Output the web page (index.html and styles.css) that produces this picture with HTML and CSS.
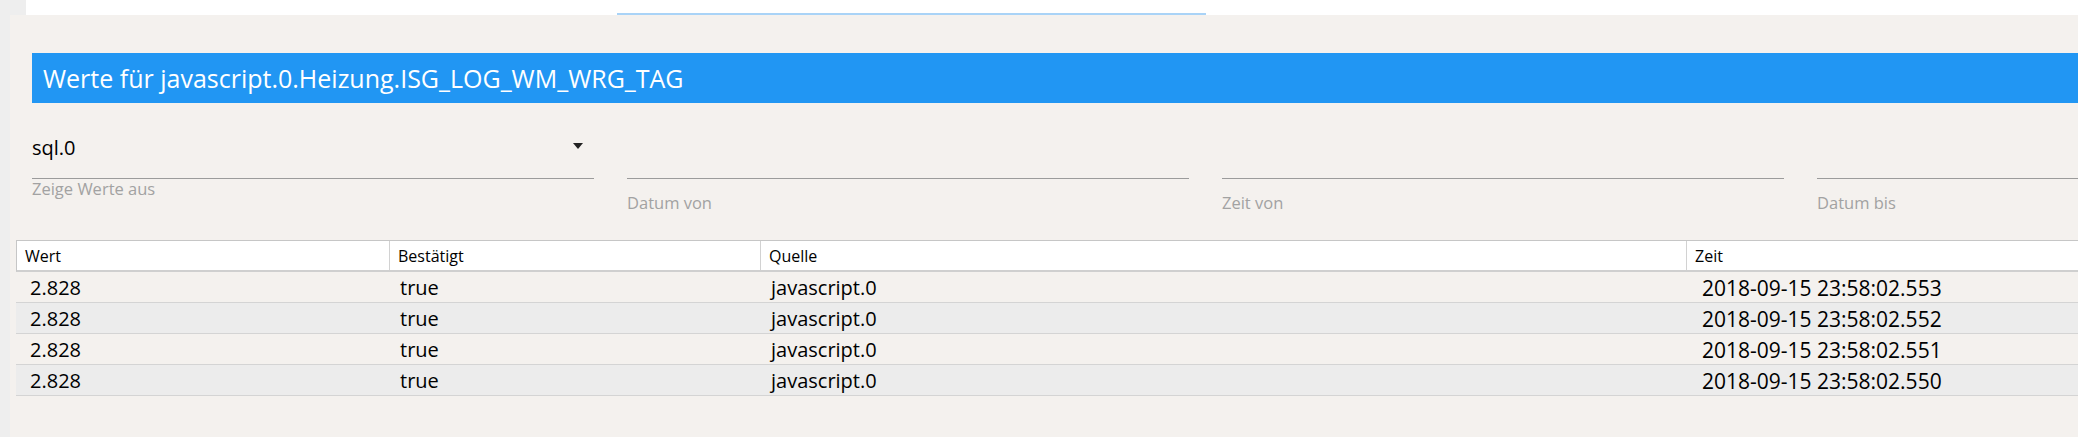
FILE: index.html
```html
<!DOCTYPE html>
<html lang="de">
<head>
<meta charset="utf-8">
<title>Werte</title>
<link rel="stylesheet" href="styles.css">
</head>
<body>
<div class="topbar">
  <div class="tabs"><div class="tab-indicator"></div></div>
</div>
<div class="panel">
  <div class="title-bar">Werte für javascript.0.Heizung.ISG_LOG_WM_WRG_TAG</div>
  <div class="fields">
    <div class="field">
      <div class="field-input">
        <span class="value">sql.0</span>
        <span class="arrow"></span>
      </div>
      <div class="field-label">Zeige Werte aus</div>
    </div>
    <div class="field">
      <div class="field-input"></div>
      <div class="field-label picker">Datum von</div>
    </div>
    <div class="field">
      <div class="field-input"></div>
      <div class="field-label picker">Zeit von</div>
    </div>
    <div class="field">
      <div class="field-input"></div>
      <div class="field-label picker">Datum bis</div>
    </div>
  </div>
  <div class="table">
    <div class="row head">
      <div class="cell">Wert</div>
      <div class="cell">Bestätigt</div>
      <div class="cell">Quelle</div>
      <div class="cell">Zeit</div>
    </div>
    <div class="row">
      <div class="cell">2.828</div>
      <div class="cell">true</div>
      <div class="cell">javascript.0</div>
      <div class="cell time">2018-09-15 23:58:02.553</div>
    </div>
    <div class="row alt">
      <div class="cell">2.828</div>
      <div class="cell">true</div>
      <div class="cell">javascript.0</div>
      <div class="cell time">2018-09-15 23:58:02.552</div>
    </div>
    <div class="row">
      <div class="cell">2.828</div>
      <div class="cell">true</div>
      <div class="cell">javascript.0</div>
      <div class="cell time">2018-09-15 23:58:02.551</div>
    </div>
    <div class="row alt">
      <div class="cell">2.828</div>
      <div class="cell">true</div>
      <div class="cell">javascript.0</div>
      <div class="cell time">2018-09-15 23:58:02.550</div>
    </div>
  </div>
</div>
</body>
</html>
```
FILE: styles.css
```css
html, body {
  margin: 0;
  padding: 0;
}
body {
  background: #eeeeee;
  font-family: "Open Sans", "Noto Sans", sans-serif;
  color: #000;
  overflow: hidden;
  width: 2078px;
  height: 437px;
}
.topbar {
  height: 15px;
  padding-left: 26px;
}
.tabs {
  height: 15px;
  background: #ffffff;
  display: flex;
  align-items: flex-end;
  padding-left: 591px;
}
.tab-indicator {
  width: 589px;
  height: 2px;
  background: #a9d3f7;
}
.panel {
  margin-left: 10px;
  background: #f4f1ee;
  height: 422px;
  padding-top: 38px;
  box-sizing: border-box;
  overflow: hidden;
}
.title-bar {
  margin-left: 22px;
  height: 50px;
  background: #2196f3;
  color: #ffffff;
  font-size: 25px;
  line-height: 50px;
  padding-left: 11px;
  white-space: nowrap;
}
.fields {
  display: flex;
  gap: 33px;
  padding-left: 22px;
}
.field {
  flex: none;
  width: 562px;
}
.field-input {
  height: 75px;
  border-bottom: 1px solid #9b9b9b;
  box-sizing: content-box;
  display: flex;
  align-items: flex-end;
  justify-content: space-between;
}
.value {
  font-size: 20px;
  line-height: 24px;
  margin-bottom: 18px;
}
.arrow {
  width: 0;
  height: 0;
  border-left: 5px solid transparent;
  border-right: 5px solid transparent;
  border-top: 6px solid #222;
  margin-right: 11px;
  margin-bottom: 29px;
}
.field-label {
  font-size: 16.5px;
  line-height: 18px;
  margin-top: 1px;
  color: #a2a2a2;
}
.field-label.picker {
  margin-top: 15px;
}
.table {
  margin-top: 28px;
  margin-left: 6px;
  width: 2100px;
}
.row {
  display: grid;
  grid-template-columns: 372px 371px 926px 1fr;
  height: 31px;
  border-bottom: 1px solid #d4d4d4;
  box-sizing: border-box;
}
.row.alt {
  background: #ececec;
}
.row .cell {
  font-size: 20px;
  line-height: 26px;
  padding-top: 3px;
  padding-left: 12px;
  white-space: nowrap;
}
.row .cell:first-child {
  padding-left: 14px;
}
.row .cell.time {
  font-size: 21px;
  padding-left: 17px;
}
.row.head {
  height: 32px;
  background: #ffffff;
  border-top: 1px solid #c6c6c6;
  border-left: 1px solid #c6c6c6;
  border-bottom: 2px solid #cfcfcf;
}
.row.head .cell {
  font-size: 16px;
  line-height: 28px;
  padding-top: 1px;
  padding-left: 8px;
}
.row.head .cell + .cell {
  border-left: 1px solid #d2d2d2;
}
```
